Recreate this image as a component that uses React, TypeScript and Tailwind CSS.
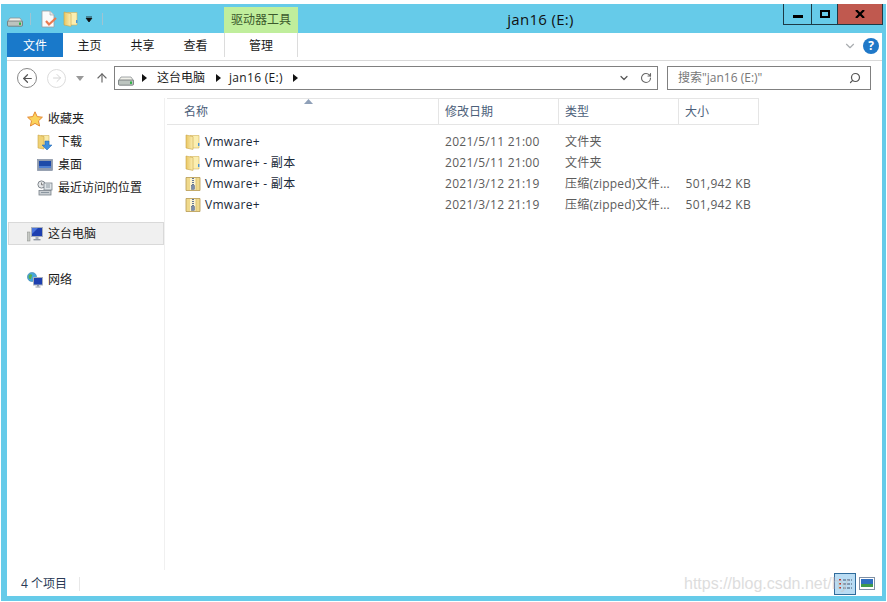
import React from 'react';
import { ArrowLeft, ArrowRight, ArrowUp, ChevronDown, RotateCw, Search } from 'lucide-react';

const fontStack = { fontFamily: '"Open Sans", "Noto Sans CJK SC", sans-serif' };

const DriveIcon = () => (
  <svg width="16" height="16" viewBox="0 0 16 16" className="shrink-0">
    <path d="M3 7 L13 7 L15.5 10.5 L0.5 10.5 Z" fill="#f1f1ea" stroke="#8d9394" strokeWidth="0.8" />
    <rect x="0.5" y="10" width="15" height="5.2" rx="1" fill="#bcc4bf" stroke="#6c7273" strokeWidth="0.8" />
    <rect x="12" y="11.5" width="2" height="2.4" fill="#2fb344" />
  </svg>
);

const FolderIcon = () => (
  <svg width="16" height="16" viewBox="0 0 16 16" className="shrink-0">
    <defs>
      <linearGradient id="leaf" x1="0" y1="0" x2="1" y2="0">
        <stop offset="0" stopColor="#e9c662" />
        <stop offset="1" stopColor="#fbeeb4" />
      </linearGradient>
    </defs>
    <path d="M5 1.5 L14 1.5 L14 14 L5 14 Z" fill="#fbeeb0" stroke="#d4b257" strokeWidth="0.6" />
    <path d="M1 1 L8 2.6 L8 15.4 L1 14 Z" fill="url(#leaf)" stroke="#c9a548" strokeWidth="0.6" />
    <rect x="13" y="9" width="1.4" height="3" fill="#4c94d8" />
  </svg>
);

const ZipIcon = () => (
  <svg width="16" height="16" viewBox="0 0 16 16" className="shrink-0">
    <path d="M1 1.5 L15 1.5 L15 14.5 L1 14.5 Z" fill="#efd98c" stroke="#b69a52" strokeWidth="0.8" />
    <rect x="5" y="2" width="6" height="12" fill="#fbf3d2" />
    <path d="M8 2 V10" stroke="#52688f" strokeWidth="1.8" strokeDasharray="1 1" />
    <rect x="6.6" y="9.5" width="2.8" height="3.8" fill="#7a8cae" stroke="#4c5c7c" strokeWidth="0.5" />
    <path d="M11 2 V14" stroke="#d8bb66" strokeWidth="0.8" />
  </svg>
);

const NoteIcon = () => (
  <svg width="16" height="18" viewBox="0 0 16 18" className="shrink-0">
    <path d="M1 1 L9 1 L13 5 L13 17 L1 17 Z" fill="#fbfbfb" stroke="#9a9fa3" strokeWidth="0.8" />
    <path d="M9 1 L9 5 L13 5" fill="#e4e6e8" stroke="#9a9fa3" strokeWidth="0.6" />
    <path d="M5 11 L8 14.5 L15 8" fill="none" stroke="#ea7a50" strokeWidth="2.2" />
  </svg>
);

const StarIcon = () => (
  <svg width="16" height="16" viewBox="0 0 16 16" className="shrink-0">
    <path d="M8 .8 L10.2 5.6 L15.4 6.2 L11.5 9.8 L12.6 15 L8 12.4 L3.4 15 L4.5 9.8 L.6 6.2 L5.8 5.6 Z" fill="#fbd35b" stroke="#e58a35" strokeWidth="1" />
  </svg>
);

const DownloadIcon = () => (
  <svg width="16" height="16" viewBox="0 0 16 16" className="shrink-0">
    <path d="M4 1.5 L12 1.5 L12 12 L4 12 Z" fill="#f9ebab" stroke="#d4b257" strokeWidth="0.6" />
    <path d="M1 1 L7 2.5 L7 15 L1 14 Z" fill="#f0d275" stroke="#c9a548" strokeWidth="0.6" />
    <path d="M8 7 L12 7 L12 11 L15 11 L10 16 L5 11 L8 11 Z" fill="#3d8fde" stroke="#1f63ad" strokeWidth="0.5" />
  </svg>
);

const DesktopIcon = () => (
  <svg width="16" height="16" viewBox="0 0 16 16" className="shrink-0">
    <rect x="0.5" y="2.5" width="15" height="11" fill="#8e9aae" stroke="#7a869a" strokeWidth="0.6" />
    <rect x="2" y="4" width="12" height="7" fill="#1e4aa8" />
    <rect x="2" y="9" width="12" height="2" fill="#4f7fd0" />
  </svg>
);

const RecentIcon = () => (
  <svg width="16" height="16" viewBox="0 0 16 16" className="shrink-0">
    <circle cx="4.5" cy="4.5" r="3.6" fill="#e6e8ea" stroke="#757c82" strokeWidth="0.9" />
    <path d="M4.5 2.5 V4.8 H6.4" fill="none" stroke="#555" strokeWidth="0.7" />
    <rect x="7" y="3" width="8" height="7" fill="#dfe4e8" stroke="#79828a" strokeWidth="0.8" />
    <rect x="2" y="10.5" width="12" height="4.5" fill="#c9ced2" stroke="#79828a" strokeWidth="0.8" />
    <path d="M9 5 H13 M9 7 H13 M4 12.5 H12" stroke="#7b8893" strokeWidth="0.8" />
  </svg>
);

const ComputerIcon = () => (
  <svg width="16" height="16" viewBox="0 0 16 16" className="shrink-0">
    <rect x="0.5" y="6" width="2.5" height="9" fill="#c6c9c5" stroke="#868a86" strokeWidth="0.5" />
    <rect x="4.5" y="1.5" width="11" height="9" fill="#1d3fb0" stroke="#a8b0bc" strokeWidth="1" />
    <path d="M5 2 H11 L5 8 Z" fill="#4a74dc" />
    <rect x="8.5" y="11" width="3" height="2" fill="#a8b0bc" />
    <rect x="6.5" y="13" width="7" height="1.4" fill="#8f97a3" />
  </svg>
);

const NetworkIcon = () => (
  <svg width="16" height="16" viewBox="0 0 16 16" className="shrink-0">
    <circle cx="5" cy="5" r="4.6" fill="#48a6d8" stroke="#2f7aa8" strokeWidth="0.5" />
    <path d="M2 3 C4 1 6 3 5 4 C4 5 5 7 3 7 C2 7 1 5 2 3 Z" fill="#58b04a" />
    <rect x="6.5" y="5.5" width="9" height="7.5" fill="#1d3fb0" stroke="#a8b0bc" strokeWidth="1" />
    <rect x="10" y="13" width="2" height="1.5" fill="#8f97a3" />
    <rect x="8.5" y="14.5" width="5" height="1" fill="#8f97a3" />
  </svg>
);

const SmallArrow = () => (
  <svg width="5" height="8" viewBox="0 0 5 8" className="shrink-0"><path d="M0 0 L5 4 L0 8 Z" fill="#111" /></svg>
);

const rows = [
  { name: 'Vmware+', date: '2021/5/11 21:00', type: '文件夹', size: '', zip: false },
  { name: 'Vmware+ - 副本', date: '2021/5/11 21:00', type: '文件夹', size: '', zip: false },
  { name: 'Vmware+ - 副本', date: '2021/3/12 21:19', type: '压缩(zipped)文件...', size: '501,942 KB', zip: true },
  { name: 'Vmware+', date: '2021/3/12 21:19', type: '压缩(zipped)文件...', size: '501,942 KB', zip: true },
];

const tabs = ['主页', '共享', '查看'];

function App() {
  return (
    <div className="w-[887px] h-[602px] bg-white pt-1 pl-px pr-px pb-px overflow-hidden text-xs text-[#1a1a1a]" style={fontStack}>
      <div className="relative flex flex-col h-[597px] bg-[#66cbe9] pl-1.5 pr-1 pb-[5px]">
        {/* title bar */}
        <div className="flex h-[29px] shrink-0">
          <div className="flex items-center w-[217px] pt-[1px]">
            <DriveIcon />
            <div className="w-px h-3 bg-[#9fc4d2] ml-[7px]" />
            <div className="ml-[10px]"><NoteIcon /></div>
            <div className="ml-[6px]"><FolderIcon /></div>
            <svg width="8" height="6" viewBox="0 0 8 6" className="ml-[6px]">
              <path d="M1 0 H7 M1 2 H7 L4 6 L1 2 Z" fill="#111" stroke="#111" strokeWidth="0.8" />
            </svg>
            <div className="w-px h-3 bg-[#9fc4d2] ml-[9px]" />
          </div>
          <div className="w-[74px] h-[26px] mt-[3px] bg-[#c0ee9c] flex items-center justify-center text-[#3c5a2c]">驱动器工具</div>
          <div className="flex-1 flex items-center justify-center pt-[1px] text-[15px] tracking-[0.3px] text-[#111]">jan16 (E:)</div>
          <div className="flex h-[21px] -mr-px border border-t-0 border-[#1c3a46]">
            <div className="w-[28px] border-r border-[#1c3a46] flex items-center justify-center">
              <div className="w-[10px] h-[3px] mt-[5px] bg-black" />
            </div>
            <div className="w-[26px] flex items-center justify-center border-r border-[#1c3a46]">
              <div className="w-[10px] h-[8px] border-2 border-black" />
            </div>
            <div className="w-[44px] bg-[#c0594f] flex items-center justify-center font-bold text-black">
              <svg width="10" height="8" viewBox="0 0 10 8"><path d="M1 0 L9 8 M9 0 L1 8" stroke="#000" strokeWidth="2.2" /></svg>
            </div>
          </div>
        </div>

        {/* ribbon tabs */}
        <div className="flex h-[28px] shrink-0 bg-white border-b border-[#d9d9d9]">
          <div className="w-14 h-[24px] bg-[#1979ca] text-white flex items-center justify-center pt-px">文件</div>
          <div className="flex w-[161px]">
            {tabs.map((t) => (
              <div key={t} className="w-[53px] h-[24px] flex items-center justify-center pt-[2px]">{t}</div>
            ))}
          </div>
          <div className="w-[74px] h-[24px] flex items-center justify-center border-x border-[#dcdcdc] pt-[2px]">管理</div>
          <div className="flex-1 flex justify-end items-center gap-[6px] pr-[3px] pb-[2px]">
            <ChevronDown size={14} className="text-[#a9adb0]" />
            <div className="w-4 h-4 rounded-full bg-[#1f78c8] text-white font-bold flex items-center justify-center text-xs">?</div>
          </div>
        </div>

        {/* nav bar */}
        <div className="flex items-center h-[37px] shrink-0 bg-white pb-[3px]">
          <div className="ml-[10px] w-[20px] h-[20px] rounded-full border border-[#888] flex items-center justify-center">
            <ArrowLeft size={13} strokeWidth={2.2} className="text-[#555]" />
          </div>
          <div className="ml-[10px] w-[19px] h-[19px] rounded-full border border-[#dcdcdc] flex items-center justify-center">
            <ArrowRight size={12} className="text-[#d4d4d4]" />
          </div>
          <svg width="8" height="5" viewBox="0 0 8 5" className="ml-[10px]"><path d="M0 0 H8 L4 5 Z" fill="#999" /></svg>
          <ArrowUp size={14} strokeWidth={2} className="ml-[11px] text-[#666]" />
          <div className="ml-[5px] w-[544px] h-[24px] border border-[#808080] flex items-center pl-[3px] pr-[5px]">
            <DriveIcon />
            <div className="ml-[8px]"><SmallArrow /></div>
            <span className="ml-[10px]">这台电脑</span>
            <div className="ml-[11px]"><SmallArrow /></div>
            <span className="ml-[8px] tracking-[0.3px]">jan16 (E:)</span>
            <div className="ml-[10px]"><SmallArrow /></div>
            <div className="flex-1" />
            <ChevronDown size={12} strokeWidth={2.4} className="text-[#555]" />
            <RotateCw size={12} strokeWidth={2.2} className="ml-[10px] text-[#666]" />
          </div>
          <div className="ml-[9px] w-[204px] h-[24px] border border-[#808080] flex items-center pl-[10px] pr-[9px] text-[#777]">
            <span className="flex-1">搜索"jan16 (E:)"</span>
            <Search size={12} strokeWidth={2.4} className="-scale-x-100 text-[#555]" />
          </div>
        </div>

        {/* body */}
        <div className="flex flex-1 min-h-0 bg-white">
          <div className="w-[158px] shrink-0 h-[472px] border-r border-[#f0f0f0] pl-px">
            <div className="flex items-center gap-[5px] h-[23px] mt-[9px] pl-[19px]"><StarIcon /><span>收藏夹</span></div>
            <div className="flex items-center gap-[5px] h-[23px] pl-[29px]"><DownloadIcon /><span>下载</span></div>
            <div className="flex items-center gap-[5px] h-[23px] pl-[29px]"><DesktopIcon /><span>桌面</span></div>
            <div className="flex items-center gap-[5px] h-[23px] pl-[29px]"><RecentIcon /><span>最近访问的位置</span></div>
            <div className="flex items-center gap-[5px] h-[23px] mt-[23px] pl-[18px] bg-[#f0f0f0] border border-[#d9d9d9]"><ComputerIcon /><span>这台电脑</span></div>
            <div className="flex items-center gap-[5px] h-[23px] mt-[23px] pl-[19px]"><NetworkIcon /><span>网络</span></div>
          </div>
          <div className="flex-1 pl-0.5">
            <div className="relative flex w-[592px] h-[27px] border-y border-[#e5e5e5] text-[#4c607a]">
              <div className="w-[272px] border-r border-[#e5e5e5] pl-[17px] flex items-center">名称</div>
              <div className="w-[120px] border-r border-[#e5e5e5] pl-[6px] flex items-center">修改日期</div>
              <div className="w-[120px] border-r border-[#e5e5e5] pl-[6px] flex items-center">类型</div>
              <div className="w-[80px] border-r border-[#e5e5e5] pl-[6px] flex items-center">大小</div>
              <svg width="9" height="5" viewBox="0 0 9 5" className="absolute left-[137px] top-0"><path d="M0 5 L4.5 0 L9 5 Z" fill="#8fa0b8" /></svg>
            </div>
            <div className="pt-[6px]">
              {rows.map((r, i) => (
                <div key={i} className="flex items-center h-[21px] text-[#5c5c5c]">
                  <div className="w-[272px] flex items-center pl-[18px] gap-1 text-[#1a2a3a] tracking-[0.3px]">
                    {r.zip ? <ZipIcon /> : <FolderIcon />}
                    <span>{r.name}</span>
                  </div>
                  <div className="w-[120px] pl-[6px] tracking-[0.27px]">{r.date}</div>
                  <div className="w-[120px] pl-[6px] tracking-[0.2px]">{r.type}</div>
                  <div className="w-[72px] text-right tracking-[0.3px]">{r.size}</div>
                </div>
              ))}
            </div>
          </div>
        </div>

        {/* status bar */}
        <div className="relative flex items-center h-[25px] shrink-0 bg-white text-[#2a3a55]">
          <div className="w-[73px] h-[14px] flex items-center pl-[14px] border-r border-[#e8e8e8]">4 个项目</div>
          <div className="flex-1" />
          <div className="w-[22px] h-[22px] bg-[#b9dcf3] border border-[#2f6c9c] flex items-center justify-center">
            <svg width="15" height="13" viewBox="0 0 15 13">
              <path d="M2 2 V3.5 M2 6 V7.5 M2 10 V11.5" stroke="#c0392b" strokeWidth="2" />
              <path d="M5 3 H14 M5 7 H14 M5 11 H14" stroke="#44536a" strokeWidth="1" strokeDasharray="3 1" />
            </svg>
          </div>
          <div className="w-[22px] h-[22px] mr-[4px] flex items-center justify-center">
            <svg width="16" height="13" viewBox="0 0 16 13">
              <rect x="0.5" y="0.5" width="15" height="12" fill="#fff" stroke="#8090a4" />
              <rect x="2" y="2" width="12" height="6" fill="#2f6fc0" />
              <rect x="2" y="7" width="12" height="3" fill="#3f9a4c" />
            </svg>
          </div>
          <div className="absolute left-[677px] top-[2px] text-[16px] text-[#c8c8c8] opacity-60" style={{ fontFamily: '"Liberation Sans", sans-serif' }}>https://blog.csdn.net/hy</div>
        </div>
      </div>
    </div>
  );
}

export default App;
